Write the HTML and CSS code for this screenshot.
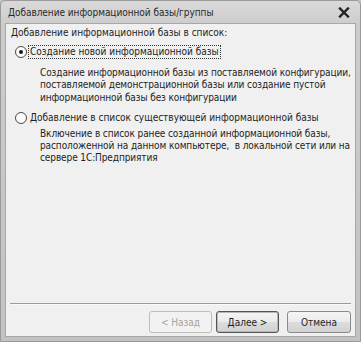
FILE: index.html
```html
<!DOCTYPE html>
<html lang="ru">
<head>
<meta charset="utf-8">
<link rel="stylesheet" href="styles.css">
</head>
<body>
<div class="window">
  <div class="titlebar">
    <span class="title">Добавление информационной базы/группы</span>
    <svg class="close" width="12" height="11" viewBox="0 0 12 11"><path d="M2 1.5 L10 9.5 M10 1.5 L2 9.5" stroke="#222" stroke-width="2.4" stroke-linecap="square"/></svg>
  </div>
  <div class="client">
    <div class="content">
      <div class="heading">Добавление информационной базы в список:</div>
      <div class="option">
        <span class="radio checked"></span>
        <span class="label focused">Создание новой информационной базы</span>
      </div>
      <div class="desc">Создание информационной базы из поставляемой конфигурации,<br>поставляемой демонстрационной базы или создание пустой<br>информационной базы без конфигурации</div>
      <div class="option second">
        <span class="radio"></span>
        <span class="label">Добавление в список существующей информационной базы</span>
      </div>
      <div class="desc desc2">Включение в список ранее созданной информационной базы,<br>расположенной на данном компьютере,&nbsp; в локальной сети или на<br>сервере 1С:Предприятия</div>
    </div>
    <div class="footer">
      <div class="sep"></div>
      <div class="buttons">
        <button class="btn disabled">&lt; Назад</button>
        <button class="btn default">Далее &gt;</button>
        <button class="btn cancel">Отмена</button>
      </div>
    </div>
  </div>
</div>
</body>
</html>
```
FILE: styles.css
```css
html, body {
  margin: 0;
  padding: 0;
  background: #c4c4c4;
}
body {
  font-family: "DejaVu Sans Condensed", "DejaVu Sans", sans-serif;
  font-size: 10px;
  color: #1e1e1e;
}
.window {
  width: 361px;
  height: 342px;
  box-sizing: border-box;
  display: flex;
  flex-direction: column;
  background: linear-gradient(to bottom, #dadada 0px, #cccccc 24px, #c2c2c2 100%);
  border: 1px solid #9a9a9a;
  border-radius: 5px 5px 0 0;
  padding: 0 4px 4px 4px;
}
.titlebar {
  height: 22px;
  display: flex;
  align-items: center;
  justify-content: space-between;
  padding: 0 6px 0 3px;
  flex: none;
}
.title {
  color: #2a2a2a;
  padding-top: 1px;
  white-space: nowrap;
  letter-spacing: -0.05px;
}
.close {
  display: block;
  margin-top: 1px;
}
.client {
  flex: 1;
  display: flex;
  flex-direction: column;
  justify-content: space-between;
  background: #f0f0f0;
  border: 1px solid #a8a8a8;
}
.content {
  padding: 2px 0 0 5px;
  white-space: nowrap;
}
.heading {
  height: 14px;
  line-height: 14px;
}
.option {
  display: flex;
  align-items: center;
  margin-top: 5px;
  padding-left: 4px;
  height: 14px;
}
.option.second {
  margin-top: 7px;
}
.radio {
  width: 10px;
  height: 10px;
  border: 1px solid #4a4a4a;
  border-radius: 50%;
  background: #fbfbfb;
  box-sizing: content-box;
  position: relative;
  margin-right: 1px;
  flex: none;
}
.radio.checked::after {
  content: "";
  position: absolute;
  left: 3px;
  top: 3px;
  width: 4px;
  height: 4px;
  border-radius: 50%;
  background: #1a1a1a;
}
.label {
  line-height: 12px;
  padding: 0 1px;
  border: 1px solid transparent;
}
.label.focused {
  border: 1px dotted #333;
}
.desc {
  margin: 8px 0 0 29px;
  line-height: 12.3px;
  letter-spacing: -0.1px;
}
.desc.desc2 {
  margin-top: 3px;
}
.footer {
  padding: 0 4px 3px 4px;
}
.sep {
  height: 1px;
  background: #9a9a9a;
  border-bottom: 1px solid #fafafa;
  margin: 0 0 6px 0;
}
.buttons {
  display: flex;
  justify-content: flex-end;
  gap: 4px;
}
.btn {
  font-family: "DejaVu Sans Condensed", "DejaVu Sans", sans-serif;
  font-size: 10px;
  width: 63px;
  height: 22px;
  padding: 0;
  border: 1px solid #8a8a8a;
  border-radius: 3px;
  background: linear-gradient(to bottom, #f4f4f4 0%, #ebebeb 50%, #dcdcdc 51%, #d2d2d2 100%);
  color: #1e1e1e;
}
.btn.disabled {
  color: #a4a4a4;
  border-color: #bdbdbd;
  background: #f2f2f2;
}
.btn.default {
  border-color: #555;
  box-shadow: inset 0 0 0 1px #b8b8b8;
}
.btn.cancel {
  margin-left: 4px;
  width: 64px;
}
```
